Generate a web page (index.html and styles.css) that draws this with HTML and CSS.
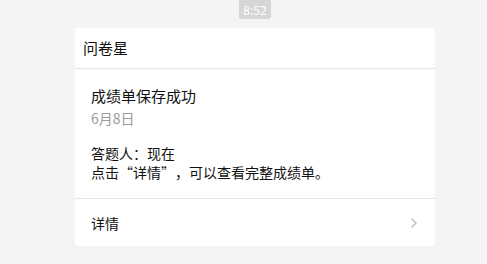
FILE: index.html
```html
<!DOCTYPE html>
<html lang="zh-CN">
<head>
    <meta charset="UTF-8">
    <meta name="viewport" content="width=device-width, initial-scale=1.0">
    <title>问卷星</title>
    <link rel="stylesheet" href="styles.css">
</head>
<body>
    <div class="chat">
        <div class="time">8:52</div>
        <div class="card">
            <div class="card-head">问卷星</div>
            <div class="card-body">
                <div class="title">成绩单保存成功</div>
                <div class="date">6月8日</div>
                <div class="info">
                    <p>答题人：现在</p>
                    <p>点击“详情”，可以查看完整成绩单。</p>
                </div>
            </div>
            <div class="card-foot">
                <span>详情</span>
                <svg class="arrow" width="8" height="12" viewBox="0 0 8 12">
                    <path d="M1.5 1.5 L6 6 L1.5 10.5" fill="none" stroke="#c4c4c4" stroke-width="1.5"/>
                </svg>
            </div>
        </div>
    </div>
</body>
</html>
```

FILE: styles.css
```css
body {
    margin: 0;
    background-color: #f4f4f4;
    font-family: "Noto Sans CJK SC", "Noto Sans", sans-serif;
    color: #111;
    text-spacing-trim: space-all;
    font-feature-settings: "fwid" 1;
}

.chat {
    width: 360px;
    margin-left: 75px;
}

.time {
    width: 32px;
    height: 19px;
    margin: 0 auto;
    background-color: #d6d6d6;
    color: #fff;
    font-size: 12px;
    line-height: 19px;
    text-align: center;
    border-radius: 0 0 3px 3px;
    font-feature-settings: normal;
}

.card {
    margin-top: 9px;
    background-color: #fff;
    border-radius: 3px;
}

.card-head {
    height: 40px;
    line-height: 39px;
    padding-left: 8px;
    font-size: 15px;
    border-bottom: 1px solid #e6e6e6;
}

.card-body {
    padding: 17px 16px 16px;
    border-bottom: 1px solid #e6e6e6;
}

.title {
    font-size: 15px;
    line-height: 20px;
}

.date {
    margin-top: 2px;
    font-size: 14px;
    line-height: 20px;
    color: #9a9a9a;
    font-feature-settings: normal;
}

.info {
    margin-top: 16px;
    font-size: 14px;
    line-height: 19px;
}

.info p {
    margin: 0;
}

.card-foot {
    display: flex;
    justify-content: space-between;
    align-items: center;
    padding: 14px 17px 13px 16px;
    font-size: 14px;
    line-height: 20px;
}
```
